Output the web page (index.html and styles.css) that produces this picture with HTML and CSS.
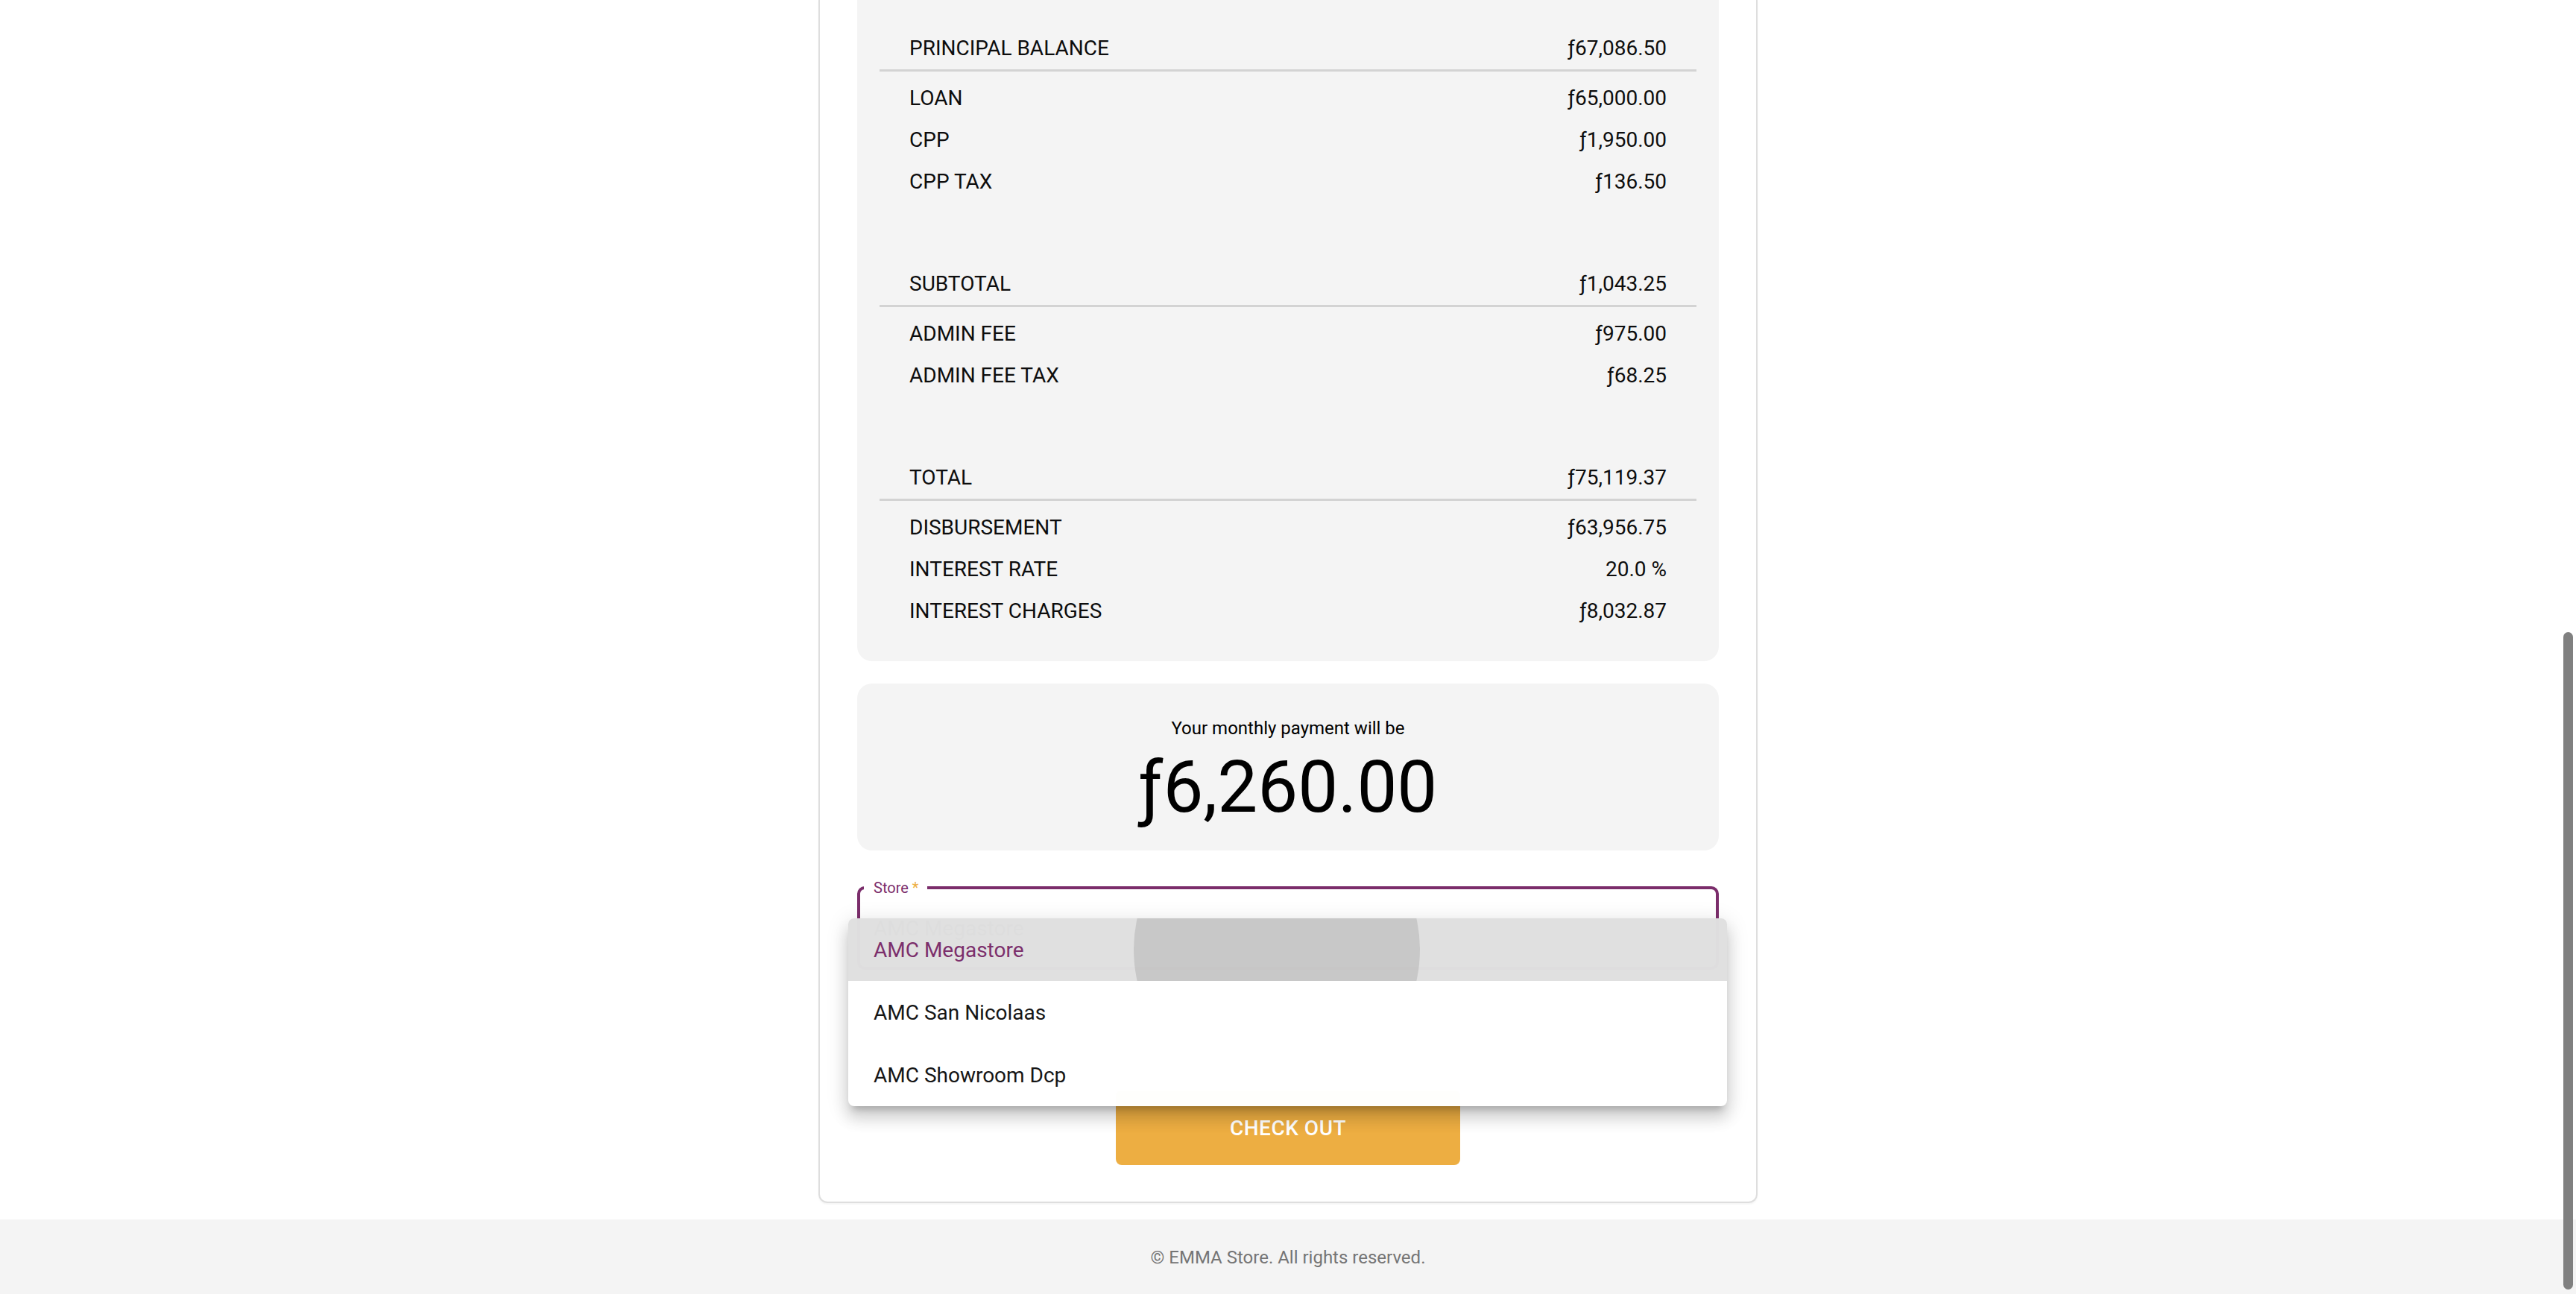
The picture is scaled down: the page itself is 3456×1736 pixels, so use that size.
FILE: index.html
```html
<!DOCTYPE html>
<html lang="en">
<head>
<meta charset="utf-8">
<title>EMMA Store - Checkout</title>
<link rel="stylesheet" href="styles.css">
</head>
<body>
<main class="main">
  <section class="card">
    <div class="summary">
      <div class="group">
        <div class="group-head"><span>PRINCIPAL BALANCE</span><span>ƒ67,086.50</span></div>
        <div class="group-rows">
          <div class="row"><span>LOAN</span><span>ƒ65,000.00</span></div>
          <div class="row"><span>CPP</span><span>ƒ1,950.00</span></div>
          <div class="row"><span>CPP TAX</span><span>ƒ136.50</span></div>
        </div>
      </div>
      <div class="group">
        <div class="group-head"><span>SUBTOTAL</span><span>ƒ1,043.25</span></div>
        <div class="group-rows">
          <div class="row"><span>ADMIN FEE</span><span>ƒ975.00</span></div>
          <div class="row"><span>ADMIN FEE TAX</span><span>ƒ68.25</span></div>
        </div>
      </div>
      <div class="group">
        <div class="group-head"><span>TOTAL</span><span>ƒ75,119.37</span></div>
        <div class="group-rows">
          <div class="row"><span>DISBURSEMENT</span><span>ƒ63,956.75</span></div>
          <div class="row"><span>INTEREST RATE</span><span>20.0 %</span></div>
          <div class="row"><span>INTEREST CHARGES</span><span>ƒ8,032.87</span></div>
        </div>
      </div>
    </div>

    <div class="payment">
      <div class="payment-label">Your monthly payment will be</div>
      <div class="payment-amount">ƒ6,260.00</div>
    </div>

    <div class="field-wrap">
      <fieldset class="field">
        <legend class="field-label">Store <span class="req">*</span></legend>
        <div class="field-value">AMC Megastore</div>
      </fieldset>
      <ul class="menu">
        <li class="menu-item selected"><span class="ripple"></span><span class="menu-text">AMC Megastore</span></li>
        <li class="menu-item"><span class="menu-text">AMC San Nicolaas</span></li>
        <li class="menu-item"><span class="menu-text">AMC Showroom Dcp</span></li>
      </ul>
    </div>

    <button class="checkout" type="button">CHECK OUT</button>
  </section>
</main>
<footer class="footer">© EMMA Store. All rights reserved.</footer>
<div class="scroll-thumb"></div>
</body>
</html>
```

FILE: styles.css
```css
html, body {
  margin: 0;
  padding: 0;
}
body {
  font-family: Roboto, "Liberation Sans", Arial, sans-serif;
  background: #ffffff;
  color: #111111;
  height: 1736px;
  overflow: hidden;
}

.main {
  display: flex;
  justify-content: center;
}

.card {
  box-sizing: border-box;
  width: 1260px;
  border: 2px solid #dedede;
  border-top: 0;
  border-radius: 0 0 12px 12px;
  padding: 0 50px 49px;
  box-shadow: 0 2px 2px rgba(0, 0, 0, 0.04);
  display: flex;
  flex-direction: column;
}

/* summary box */
.summary {
  background: #f4f4f4;
  border-radius: 0 0 20px 20px;
  padding: 37px 30px 39px;
}
.group + .group {
  margin-top: 81px;
}
.group-head,
.row {
  display: flex;
  justify-content: space-between;
  padding: 0 40px;
  font-size: 28px;
  line-height: 56px;
  color: #0d0d0d;
}
.group-head {
  border-bottom: 3px solid #d3d3d3;
}
.group-rows {
  padding-top: 8px;
}

/* monthly payment */
.payment {
  margin-top: 30px;
  background: #f4f4f4;
  border-radius: 20px;
  padding: 42px 0 29px;
  text-align: center;
  color: #000000;
}
.payment-label {
  font-size: 24px;
  line-height: 36px;
}
.payment-amount {
  margin-top: 5px;
  font-size: 96px;
  line-height: 112px;
}

/* store select */
.field-wrap {
  position: relative;
  margin-top: 38px;
}
.field {
  margin: 0;
  min-width: 0;
  border: 4px solid #7b2d6b;
  border-radius: 10px;
  padding: 0 5px;
}
.field-label {
  font-size: 20px;
  line-height: 24px;
  padding: 0 12px 0 13px;
  color: #7b2d6b;
}
.req {
  color: #edae42;
}
.field-value {
  box-sizing: border-box;
  height: 94px;
  display: flex;
  align-items: center;
  padding: 0 13px 10px;
  font-size: 28px;
  color: #212121;
}

.menu {
  position: absolute;
  left: -12px;
  top: 53px;
  width: calc(100% + 23px);
  margin: 0;
  padding: 0;
  list-style: none;
  background: #ffffff;
  border-radius: 8px;
  overflow: hidden;
  opacity: 0.988;
  z-index: 10;
  box-shadow:
    0 10px 10px -6px rgba(0, 0, 0, 0.2),
    0 16px 20px 2px rgba(0, 0, 0, 0.12),
    0 6px 28px 4px rgba(0, 0, 0, 0.1);
}
.menu-item {
  position: relative;
  overflow: hidden;
  height: 84px;
  display: flex;
  align-items: center;
  padding-left: 34px;
  font-size: 28px;
  color: #141414;
}
.menu-item.selected {
  background: #e0e0e0;
  color: #7b2d6b;
}
.menu-text {
  position: relative;
}
.ripple {
  position: absolute;
  left: 383px;
  top: -150px;
  width: 384px;
  height: 384px;
  border-radius: 50%;
  background: #c8c8c8;
}

/* button */
.checkout {
  align-self: center;
  margin-top: 162px;
  width: 462px;
  height: 100px;
  border: 0;
  border-radius: 8px;
  background: #edae42;
  color: #ffffff;
  font-family: Roboto, "Liberation Sans", Arial, sans-serif;
  font-weight: 500;
  font-size: 28px;
  letter-spacing: 0.5px;
  padding: 0;
}

/* footer */
.footer {
  box-sizing: border-box;
  margin-top: 22px;
  height: 100px;
  padding-top: 37px;
  background: #f4f4f4;
  text-align: center;
  font-size: 24px;
  line-height: 28px;
  color: #757575;
}

/* overlay scrollbar */
.scroll-thumb {
  position: fixed;
  right: 4px;
  top: 848px;
  width: 13px;
  height: 882px;
  border-radius: 7px;
  background: #808080;
}
```
